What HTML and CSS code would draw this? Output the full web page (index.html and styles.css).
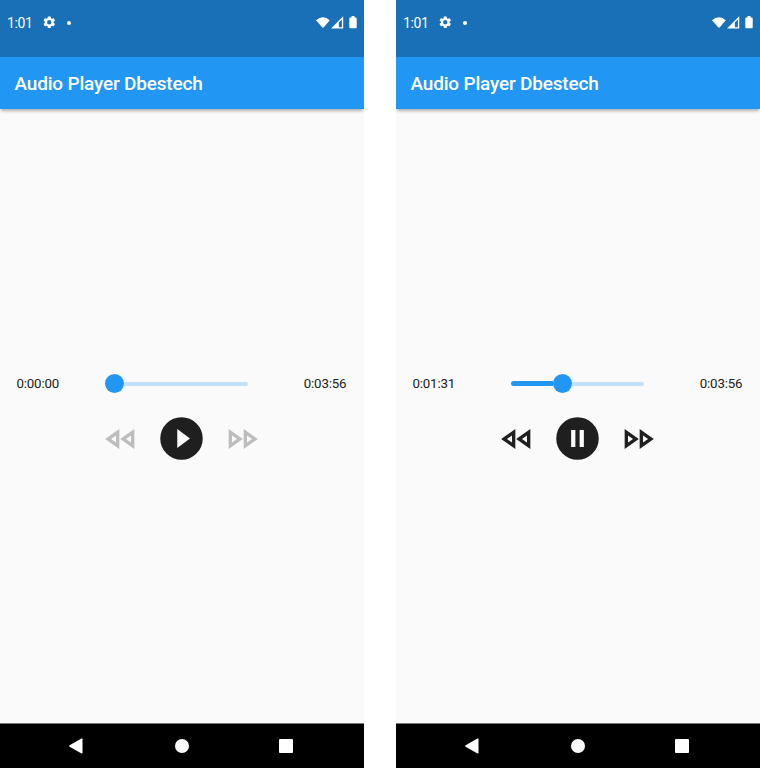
FILE: index.html
```html
<!DOCTYPE html>
<html lang="en">
<head>
<meta charset="utf-8">
<title>Audio Player Dbestech</title>
<link rel="stylesheet" href="styles.css">
</head>
<body>
<svg width="0" height="0" class="defs">
  <symbol id="gear" viewBox="0 0 24 24"><path d="M19.14 12.94c.04-.3.06-.61.06-.94s-.02-.64-.07-.94l2.03-1.58a.49.49 0 0 0 .12-.61l-1.92-3.32a.49.49 0 0 0-.59-.22l-2.39.96a7 7 0 0 0-1.62-.94l-.36-2.54a.48.48 0 0 0-.48-.41h-3.84a.47.47 0 0 0-.47.41l-.36 2.54c-.59.24-1.13.57-1.62.94l-2.39-.96a.48.48 0 0 0-.59.22L2.74 8.87a.47.47 0 0 0 .12.61l2.03 1.58c-.05.3-.09.63-.09.94s.02.64.07.94l-2.03 1.58a.49.49 0 0 0-.12.61l1.92 3.32c.12.22.37.29.59.22l2.39-.96c.5.38 1.03.7 1.62.94l.36 2.54c.05.24.24.41.48.41h3.84c.24 0 .44-.17.47-.41l.36-2.54a6.6 6.6 0 0 0 1.62-.94l2.39.96c.22.08.47 0 .59-.22l1.92-3.32a.47.47 0 0 0-.12-.61zM12 15.6a3.6 3.6 0 1 1 0-7.2 3.6 3.6 0 0 1 0 7.2z"/></symbol>
  <symbol id="signals" viewBox="0 0 42 14"><path d="M0 4.200Q7 -1.800 13.800 4.200L7.800 11.300Q7 12.200 6.200 11.300Z"/><path fill-rule="evenodd" d="M27.200 .3V12.500H15ZM22.900 6.200V11.300H25.900V3.400Z"/><path d="M34.300 1.400H35.500V0H38.500V1.400H39.700Q40.700 1.400 40.700 2.400V11.200Q40.700 12.200 39.700 12.200H34.300Q33.300 12.200 33.300 11.200V2.400Q33.300 1.400 34.300 1.400Z"/></symbol>
  <symbol id="rewind" viewBox="0 0 24 24"><path d="M18 9.860v4.280L14.970 12 18 9.860m-9 0v4.280L5.970 12 9 9.860M20 6l-8.500 6 8.500 6V6zm-9 0l-8.500 6 8.500 6V6z"/></symbol>
  <symbol id="forward" viewBox="0 0 24 24"><path d="M15 9.860L18.030 12 15 14.140V9.860m-9 0L9.030 12 6 14.140V9.860M13 6v12l8.500-6L13 6zM4 6v12l8.500-6L4 6z"/></symbol>
  <symbol id="play" viewBox="0 0 24 24"><path d="M12 2a10 10 0 1 0 0 20 10 10 0 0 0 0-20zM10 16.500v-9l6 4.500z"/></symbol>
  <symbol id="pause" viewBox="0 0 24 24"><path d="M12 2a10 10 0 1 0 0 20 10 10 0 0 0 0-20zM11 16H9V8h2zM15 16h-2V8h2z"/></symbol>
  <symbol id="back" viewBox="0 0 14 16"><path d="M.6 7.300 12.500.6Q13.500.1 13.500 1.200V14.800Q13.500 15.900 12.500 15.400L.6 8.700Q-.4 8 .6 7.300Z"/></symbol>
</svg>
<main class="screens">
  <section class="phone">
    <header class="status"><span class="clock">1:01</span><svg class="gear"><use href="#gear"/></svg><i class="dot"></i><svg class="signals"><use href="#signals"/></svg></header>
    <h1 class="appbar">Audio Player Dbestech</h1>
    <div class="content">
      <div class="progress"><span class="time">0:00:00</span><div class="slider start"><i class="thumb"></i><i class="rest"></i></div><span class="time">0:03:56</span></div>
      <div class="controls disabled"><svg class="skip"><use href="#rewind"/></svg><svg class="toggle"><use href="#play"/></svg><svg class="skip"><use href="#forward"/></svg></div>
    </div>
    <nav class="nav"><svg class="back"><use href="#back"/></svg><i class="home"></i><i class="recent"></i></nav>
  </section>
  <section class="phone">
    <header class="status"><span class="clock">1:01</span><svg class="gear"><use href="#gear"/></svg><i class="dot"></i><svg class="signals"><use href="#signals"/></svg></header>
    <h1 class="appbar">Audio Player Dbestech</h1>
    <div class="content">
      <div class="progress"><span class="time">0:01:31</span><div class="slider"><i class="played"></i><i class="thumb"></i><i class="rest"></i></div><span class="time">0:03:56</span></div>
      <div class="controls"><svg class="skip"><use href="#rewind"/></svg><svg class="toggle"><use href="#pause"/></svg><svg class="skip"><use href="#forward"/></svg></div>
    </div>
    <nav class="nav"><svg class="back"><use href="#back"/></svg><i class="home"></i><i class="recent"></i></nav>
  </section>
</main>
</body>
</html>
```
FILE: styles.css
```css
* { box-sizing: border-box; }
body { margin: 0; background: #fff; font-family: Roboto, sans-serif; overflow: hidden; }
.defs { display: none; }
svg { display: block; flex: none; fill: currentColor; }
.screens { display: flex; gap: 32px; }
.phone { display: flex; flex-direction: column; width: 364px; height: 768px; background: #fafafa; overflow: hidden; }
.status { display: flex; align-items: center; height: 57px; padding: 0 6.500px 11px 7px; background: #1a70b7; color: #fff; }
.clock { width: 34.500px; font-size: 14px; line-height: 16px; letter-spacing: -.4px; white-space: nowrap; }
.gear { width: 14.500px; height: 14.500px; margin-top: -1px; }
.dot { width: 4px; height: 4px; margin: -1px 0 0 11px; border-radius: 50%; background: #fff; }
.signals { width: 42px; height: 14px; margin-left: auto; }
.appbar { height: 52px; margin: 0; padding-left: 14.500px; background: #2196f3; color: #fff; font-size: 19px; font-weight: 500; letter-spacing: -.19px; line-height: 54px; box-shadow: 0 3px 3px -1px rgba(0,0,0,.3); }
.content { flex: 1; padding-top: 261px; }
.progress { display: flex; align-items: center; height: 27px; padding-left: 16.400px; }
.time { width: 43px; font-size: 13.300px; letter-spacing: -.15px; line-height: 18px; color: #212121; white-space: nowrap; }
.slider { display: flex; align-items: center; width: 133px; margin: 0 55.300px 0 56px; }
.played { width: 42px; height: 5.500px; border-radius: 3px 0 0 3px; background: #2196f3; }
.thumb { width: 19px; height: 19px; border-radius: 50%; background: #2196f3; }
.rest { flex: 1; height: 4px; border-radius: 0 2px 2px 0; background: #c3e0f8; }
.start { width: 143px; margin-left: 46px; }
.controls { display: flex; align-items: center; height: 51px; margin-top: 16px; padding-left: 101px; color: #1f1f1f; }
.disabled .skip { color: #bdbdbd; }
.skip { width: 40px; height: 40px; }
.toggle { width: 51px; height: 51px; margin: 0 15px 0 15.300px; }
.nav { display: flex; align-items: center; height: 45px; padding-left: 69px; border-top: 1px solid #777; background: #000; color: #fff; }
.back { width: 14px; height: 16px; }
.home { width: 14px; height: 14px; margin-left: 92px; border-radius: 50%; background: #fff; }
.recent { width: 14px; height: 14px; margin-left: 90.400px; border-radius: 1px; background: #fff; }
```
